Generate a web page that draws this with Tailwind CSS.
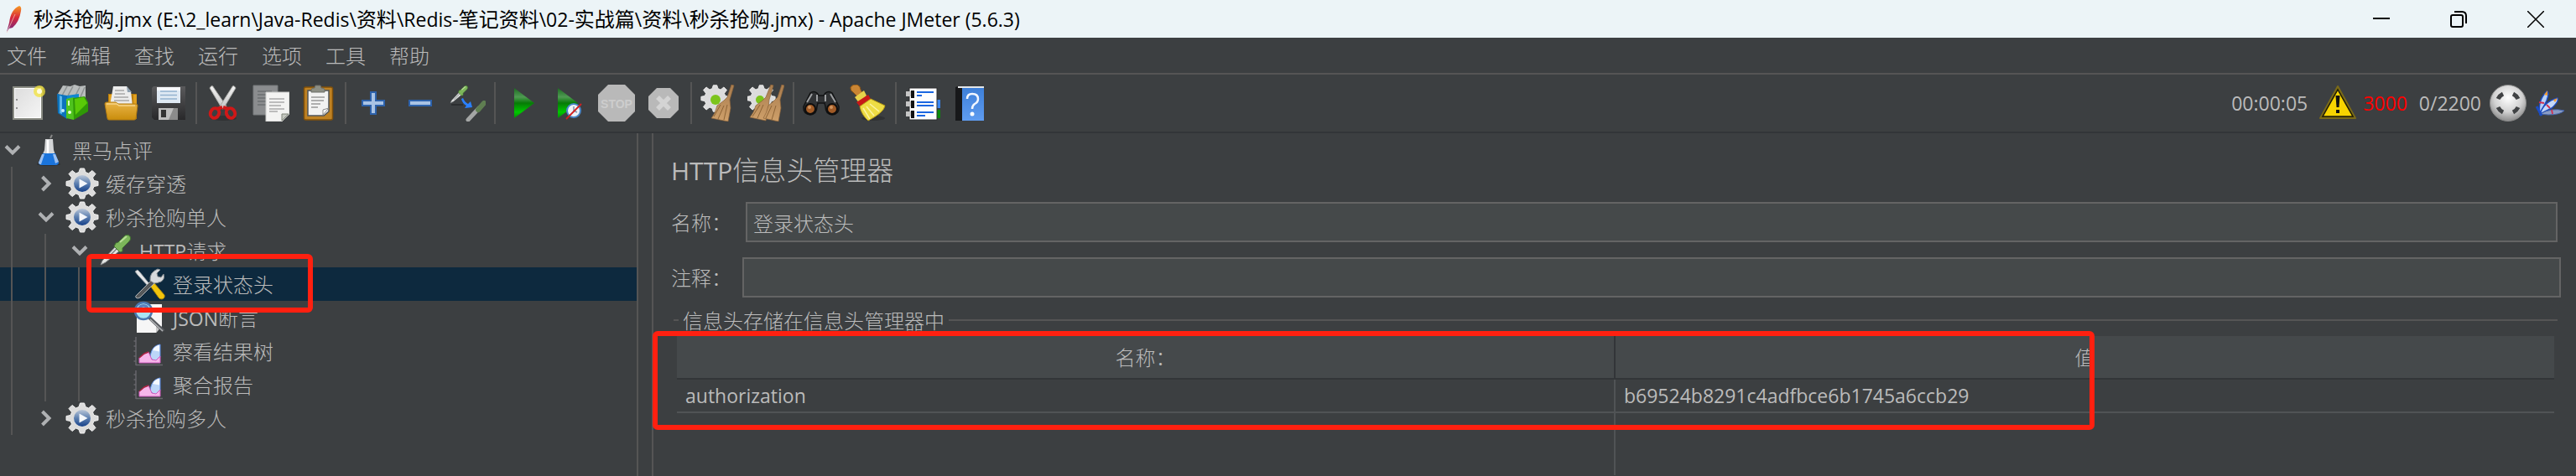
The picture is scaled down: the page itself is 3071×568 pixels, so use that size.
<!DOCTYPE html>
<html lang="zh-CN">
<head>
<meta charset="utf-8">
<title>秒杀抢购.jmx - Apache JMeter (5.6.3)</title>
<script src="https://cdn.jsdelivr.net/npm/@tailwindcss/browser@4"></script>
</head>
<body class="min-h-screen flex flex-col bg-[#3c3f41] text-[#bbbbbb] text-[24px] font-light font-['Noto_Sans_CJK_SC',sans-serif] leading-8 whitespace-nowrap overflow-x-hidden">

<!-- Shared symbols -->
<svg class="absolute size-0" aria-hidden="true">
  <defs>
    <linearGradient id="gGreen" x1="0" y1="0" x2="0" y2="1"><stop offset="0" stop-color="#1d6b22"/><stop offset=".3" stop-color="#4f9a52"/><stop offset=".5" stop-color="#067a06"/><stop offset=".8" stop-color="#00c800"/><stop offset="1" stop-color="#068a06"/></linearGradient>
    <linearGradient id="gFolder" x1="0" y1="0" x2="0" y2="1"><stop offset="0" stop-color="#eab548"/><stop offset="1" stop-color="#c98d0c"/></linearGradient>
    <linearGradient id="gPaper" x1="0" y1="0" x2="1" y2="1"><stop offset="0" stop-color="#dcdcdc"/><stop offset="1" stop-color="#f6f6f6"/></linearGradient>
    <linearGradient id="gDisk" x1="0" y1="0" x2="0" y2="1"><stop offset="0" stop-color="#5a5a5c"/><stop offset="1" stop-color="#28282a"/></linearGradient>
    <linearGradient id="gBlade" x1="0" y1="0" x2="0" y2="1"><stop offset="0" stop-color="#f4f4f4"/><stop offset="1" stop-color="#c4c4c4"/></linearGradient>
    <linearGradient id="gFeather" x1="0" y1="0" x2="0" y2="1"><stop offset="0" stop-color="#f79a22"/><stop offset=".45" stop-color="#d8283a"/><stop offset="1" stop-color="#6c2a86"/></linearGradient>
    <linearGradient id="gBristle" x1="0" y1="0" x2="0" y2="1"><stop offset="0" stop-color="#a87c4e"/><stop offset="1" stop-color="#cfa06a"/></linearGradient>
    <linearGradient id="gBlueBtn" x1="0" y1="0" x2="0" y2="1"><stop offset="0" stop-color="#b9c6d8"/><stop offset=".5" stop-color="#5c7fb0"/><stop offset="1" stop-color="#16418a"/></linearGradient>
    <linearGradient id="gBook" x1="0" y1="0" x2="0" y2="1"><stop offset="0" stop-color="#3d7fd8"/><stop offset="1" stop-color="#5f9cf0"/></linearGradient>
    <radialGradient id="gBall" cx=".5" cy=".35" r=".65"><stop offset="0" stop-color="#ffffff"/><stop offset=".6" stop-color="#d2d2d2"/><stop offset="1" stop-color="#8c8c8c"/></radialGradient>
    <symbol id="gear" viewBox="0 0 40 40">
      <path fill="#dcdcdc" stroke="#f2f2f2" stroke-width="1" d="M17.500 2h5l1.500 4.500 3.500 1.500 4.500-3.500 4 4-3.500 4.500 1.500 3.500 5 1v5l-5 1-1.500 3.500 3.500 4.500-4 4-4.500-3.500-3.500 1.500-1.500 4.500h-5l-1.500-4.500-3.500-1.500-4.500 3.500-4-4 3.500-4.500-1.500-3.500-5-1v-5l5-1 1.500-3.500-3.500-4.500 4-4 4.500 3.500 3.500-1.500z"/>
    </symbol>
    <symbol id="group" viewBox="0 0 40 40">
      <use href="#gear"/>
      <circle cx="20" cy="20" r="10" fill="url(#gBlueBtn)"/>
      <path d="M16.500 14.500l10 5.500-10 5.500z" fill="#f4f7fb"/>
    </symbol>
    <symbol id="chart" viewBox="0 0 40 40">
      <path d="M4 3v34M4 36.500h32M1.500 8h2M1.500 14h2M1.500 20h2M1.500 26h2M1.500 32h2" stroke="#66666b" stroke-width="1.500" fill="none"/>
      <path d="M21 27c1-9 5-14 12-15v15l-7 6z" fill="#bcd6f8" stroke="#5b8ae0"/>
      <path d="M24 19c2-4 5-6 8-6.500v8z" fill="#f4f9ff"/>
      <path d="M8 34v-6l6-5 5-2 4 9 5 1 5-5v8z" fill="#f6b6ea" stroke="#d05ac0"/>
      <path d="M8 28l6-5 5-2" stroke="#a8243e" stroke-width="1.500" fill="none"/>
    </symbol>
    <symbol id="pipette" viewBox="0 0 40 40">
      <path d="M2 37L4 32 21 14l5 5L8 34z" fill="#e4e6e4" stroke="#85888a"/>
      <path d="M9 30L22 17" stroke="#787c7c" stroke-width="1.500"/>
      <path d="M20 11l3-1 8-8q4-2 6 1t-1 6l-8 8v4l-3 1-7-7z" fill="#7cb65a" stroke="#3f7030"/>
      <path d="M25 10l8-7" stroke="#b8dc98" stroke-width="2"/>
    </symbol>
    <symbol id="down" viewBox="0 0 30 18"><path d="M7 4.500l8 8 8-8" fill="none" stroke="#afb1b3" stroke-width="4"/></symbol>
    <symbol id="right" viewBox="0 0 30 20"><path d="M10.500 2l8 8-8 8" fill="none" stroke="#afb1b3" stroke-width="4"/></symbol>
  </defs>
</svg>

<!-- Title bar -->
<header class="h-[45px] shrink-0 bg-[#ecf4f7] text-black flex items-center">
  <svg class="w-7 h-9 ml-[2px] mr-[10px]" viewBox="0 0 28 36"><path d="M6 33l3-11Q11 6 21 2q3 1 2 6-2 13-10 20l-4 1z" fill="url(#gFeather)"/><path d="M6 34L16 12" stroke="#f6d0c0" stroke-width=".7"/></svg>
  <h1 class="font-normal">秒杀抢购<span class="font-['Open_Sans'] text-[23px]">.jmx (E:\2_learn\Java-Redis\</span>资料<span class="font-['Open_Sans'] text-[23px]">\Redis-</span>笔记资料<span class="font-['Open_Sans'] text-[23px]">\02-</span>实战篇<span class="font-['Open_Sans'] text-[23px]">\</span>资料<span class="font-['Open_Sans'] text-[23px]">\</span>秒杀抢购<span class="font-['Open_Sans'] text-[23px]">.jmx) - Apache JMeter (5.6.3)</span></h1>
  <div class="ml-auto flex h-full pr-[2px]">
    <button aria-label="最小化" class="w-[92px] flex items-center justify-center"><svg class="w-5 h-5" viewBox="0 0 20 20"><path d="M0 9h20" stroke="#000" stroke-width="2"/></svg></button>
    <button aria-label="还原" class="w-[92px] flex items-center justify-center"><svg class="w-5 h-5" viewBox="0 0 20 20"><rect x="1" y="5" width="14" height="14" rx="2" fill="none" stroke="#000" stroke-width="2"/><path d="M5 1h9q5 0 5 5v9" fill="none" stroke="#000" stroke-width="2"/></svg></button>
    <button aria-label="关闭" class="w-[92px] flex items-center justify-center"><svg class="w-5 h-5" viewBox="0 0 20 20"><path d="M0 0l20 20M20 0L0 20" stroke="#000" stroke-width="1.500"/></svg></button>
  </div>
</header>

<!-- Menu -->
<nav class="h-[44px] shrink-0 border-b-2 border-[#555555] flex items-center gap-7 pl-2">
  <button>文件</button><button>编辑</button><button>查找</button><button>运行</button><button>选项</button><button>工具</button><button>帮助</button>
</nav>

<!-- Toolbar -->
<div class="h-[70px] shrink-0 border-b-2 border-[#323538] flex items-center pl-[11px] pr-[13px]">
  <div class="flex gap-3">
    <button aria-label="新建"><svg class="size-11" viewBox="0 0 44 44"><rect x="5" y="3" width="34" height="38" fill="url(#gPaper)" stroke="#8a8c84" stroke-width="2"/><rect x="6.500" y="4.500" width="31" height="35" fill="none" stroke="#fff"/><path d="M9 17v2M9 27v2" stroke="#777" stroke-width="1.500"/><circle cx="36" cy="8" r="7" fill="#f3e33a" opacity=".75"/><circle cx="36" cy="8" r="3" fill="#fffce0"/></svg></button>
    <button aria-label="模板"><svg class="size-11" viewBox="0 0 44 44"><path d="M2 11L8 1l9 1 5-2 6 2 7-1v19L14 18z" fill="#b9bdbd"/><path d="M7 13L13 2M13 15l7-13M22 15l6-12M28 17l6-14" stroke="#8d9292" stroke-width="1.500"/><path d="M1 11l12 2v28L2 34z" fill="#0c73bd"/><path d="M13 13l14-2v20l-14 9z" fill="#1187cf"/><path d="M4 13l3 1v21l-3-1z" fill="#5db6ea"/><path d="M12 17l9-2v27l-9-2z" fill="#4fc31e"/><path d="M20 16l14-2 4 7v11L21 42z" fill="#2f9906"/><path d="M22 17l11-2 4 7-14 14z" fill="#59c908"/><circle cx="8" cy="31" r="2" fill="#c8ecff"/><circle cx="16" cy="33" r="2" fill="#e8ffd8"/><path d="M15 19v6" stroke="#d8ffc0" stroke-width="2"/></svg></button>
    <button aria-label="打开"><svg class="size-11" viewBox="0 0 44 44"><path d="M6 11h34v30H6z" fill="#b97c0a"/><path d="M7 12h5v10H7zM36 12h4v18h-4z" fill="#e0a020"/><path d="M12 2h16l5 6 2 17H8z" fill="#ececec"/><path d="M28 2l1 7h5z" fill="#8ea0b0"/><path d="M14 7h11M14 11h12M13 15h17M13 19h18" stroke="#a8a8a8" stroke-width="1.500"/><path d="M2 23q0-2 2-2h11l3 2h20q3 0 3 2l-2 15q0 2-2 2H7q-2 0-2-2z" fill="url(#gFolder)" stroke="#b47c10"/><path d="M4 23h12l3 2h19" stroke="#f6d488" stroke-width="1.500" fill="none"/></svg></button>
    <button aria-label="保存"><svg class="size-11" viewBox="0 0 44 44"><path d="M4 2h38v40H5l-3-3V4z" fill="url(#gDisk)"/><rect x="8" y="3" width="28" height="19" fill="#dfe9f3"/><path d="M8 3h28v4H8z" fill="#f6f8fb"/><path d="M12 8h20M12 12.500h20M12 17h20" stroke="#94b2cf" stroke-width="1.500"/><path d="M10 28h23v14H10z" fill="#bdbdbd"/><path d="M22 42l6-14h5v14z" fill="#8b8b8b"/><rect x="13" y="30" width="6" height="9" fill="#333"/></svg></button>
  </div>
  <div class="w-[2px] h-[50px] bg-[#555555] mx-[10px]"></div>
  <div class="flex gap-3">
    <button aria-label="剪切"><svg class="size-11" viewBox="0 0 44 44"><ellipse cx="21" cy="40" rx="16" ry="3" fill="#303234"/><path d="M5 4q3-5 5 0l15 22-5 3z" fill="url(#gBlade)" stroke="#a9aaa6"/><path d="M36 4q-3-5-5 0L17 26l4 3z" fill="url(#gBlade)" stroke="#a9aaa6"/><g fill="none" stroke="#d01818" stroke-width="4"><ellipse cx="11" cy="34" rx="5" ry="6" transform="rotate(25 11 34)"/><ellipse cx="30" cy="34" rx="5" ry="6" transform="rotate(-25 30 34)"/><path d="M14 29l6-2M27 29l-6-2"/></g></svg></button>
    <button aria-label="复制"><svg class="size-11" viewBox="0 0 44 44"><path d="M1 1h29v35H1z" fill="#8b8d8f" stroke="#777a7c"/><path d="M6 8h17M6 12h17M6 16h12M6 20h12M6 24h10" stroke="#6c6f71" stroke-width="1.500"/><path d="M16 9h28v26l-9 9H16z" fill="#f3f3f2" stroke="#c9cac8"/><path d="M35 43v-8h8z" fill="#c4c7c0" stroke="#7e8478"/><path d="M20 17h18M20 21h18M20 25h14M20 29h18M20 32h10" stroke="#aaaaaa" stroke-width="1.500"/></svg></button>
    <button aria-label="粘贴"><svg class="size-11" viewBox="0 0 44 44"><rect x="5.500" y="3" width="34" height="39" rx="2" fill="#bf8223" stroke="#80500a" stroke-width="1.500"/><path d="M10 7h25v25l-6 5H10z" fill="#f2f2f2" stroke="#505458" stroke-width="1.500"/><path d="M28 36v-6l7-2z" fill="#fff" stroke="#888"/><path d="M14 15h16M14 19h15M14 23h11M14 27h8" stroke="#999" stroke-width="1.500"/><path d="M14 9V6q0-2 4-2l1-3h6l1 3q4 0 4 2v3z" fill="#8c8e84" stroke="#6c6e68"/></svg></button>
  </div>
  <div class="w-[2px] h-[50px] bg-[#555555] mx-[10px]"></div>
  <div class="flex gap-3">
    <button aria-label="展开"><svg class="size-11" viewBox="0 0 44 44"><path d="M19 9h6v10h10v6H25v10h-6V25H9v-6h10z" fill="#a9c3e4" stroke="#2d62ab" stroke-width="2"/></svg></button>
    <button aria-label="折叠"><svg class="size-11" viewBox="0 0 44 44"><path d="M9 19h26v6H9z" fill="#a9c3e4" stroke="#2d62ab" stroke-width="2"/></svg></button>
    <button aria-label="切换"><svg class="size-11" viewBox="0 0 44 44"><path d="M3 24h14" stroke="#2c2e30" stroke-width="2"/><use href="#pipette" x="1" y="0" width="23" height="24"/><g opacity=".7"><path d="M23 42L36 28" stroke="#d0d2d0" stroke-width="5" stroke-linecap="round"/><path d="M35 30l7-8" stroke="#6f9a58" stroke-width="6" stroke-linecap="round"/></g><path d="M17 16q2 5 6 7l3-3 2 7-9 1 2-3q-5-3-6-8z" fill="#2a80ff"/></svg></button>
  </div>
  <div class="w-[2px] h-[50px] bg-[#555555] mx-[10px]"></div>
  <div class="flex gap-3">
    <button aria-label="启动"><svg class="size-11" viewBox="0 0 44 44"><path d="M12 4l24 18-24 18z" fill="url(#gGreen)"/></svg></button>
    <button aria-label="不停顿开始"><svg class="size-11" viewBox="0 0 44 44"><path d="M8 4l24 18L8 40z" fill="url(#gGreen)"/><circle cx="27" cy="31" r="8" fill="#eef3f8" stroke="#4a86c8" stroke-width="2"/><path d="M27 26v5l4 2" stroke="#8090a8" stroke-width="1.500" fill="none"/><path d="M18 41l18-18" stroke="#d22020" stroke-width="1.800"/></svg></button>
    <button aria-label="停止"><svg class="size-11" viewBox="0 0 44 44"><path d="M12 0h20l12 12v20L32 44H12L0 32V12z" fill="#b9b9b9"/><text x="22" y="28" text-anchor="middle" font-family="Liberation Sans" font-weight="700" font-size="14" fill="#cdcdcd">STOP</text></svg></button>
    <button aria-label="关闭线程"><svg class="size-11" viewBox="0 0 44 44"><path d="M14 4h16l10 10v16L30 40H14L4 30V14z" fill="#b9b9b9"/><path d="M15 15l14 14M29 15L15 29" stroke="#d4d4d4" stroke-width="5.500"/></svg></button>
  </div>
  <div class="w-[2px] h-[50px] bg-[#555555] mx-[10px]"></div>
  <div class="flex gap-3">
    <button aria-label="清除"><svg class="size-11" viewBox="0 0 44 44"><use href="#gear" x="0" y="-1" width="35" height="35"/><circle cx="18" cy="18" r="6" fill="#7cc41c"/><path d="M37 0l3 1-5 17 1 10-3 16-20-4q5-6 7-15l8-6 4-4z" fill="url(#gBristle)" stroke="#8a6238" stroke-width=".7"/><path d="M16 38l8-14M21 41l7-16M28 42l4-18" stroke="#8d6436"/></svg></button>
    <button aria-label="清除全部"><svg class="size-11" viewBox="0 0 44 44"><use href="#gear" x="-1" y="-1" width="35" height="35"/><circle cx="15" cy="18" r="5" fill="#7cc41c"/><path d="M28 0l3 1-5 17-1 10-3 15-19-4q5-6 7-14l8-6 4-4z" fill="url(#gBristle)" stroke="#8a6238" stroke-width=".7"/><path d="M41 0l3 1-5 17 1 10-3 16-18-4q4-6 6-15l7-6 4-4z" fill="url(#gBristle)" stroke="#8a6238" stroke-width=".7"/><path d="M6 38l9-14M12 40l7-16M22 40l7-15M29 42l5-17" stroke="#8d6436"/></svg></button>
  </div>
  <div class="w-[2px] h-[50px] bg-[#555555] mx-[10px]"></div>
  <div class="flex gap-3">
    <button aria-label="查找"><svg class="size-11" viewBox="0 0 44 44"><path d="M1 26L9 10q4-3 8 0l2 3h6l2-3q4-3 8 0l8 16q1 9-8 10-8-1-8-10l-1-4h-8l-1 4q0 9-8 10-9-1-8-10z" fill="#303234" stroke="#121314" stroke-width="1.500"/><path d="M5 21l6-10M39 21l-6-10M17 12v8M27 12v8" stroke="#9c9ea0" stroke-width="2"/><circle cx="9" cy="29" r="6" fill="#a05a26" stroke="#0e0e0e" stroke-width="2"/><circle cx="35" cy="29" r="6" fill="#a05a26" stroke="#0e0e0e" stroke-width="2"/><circle cx="8" cy="27" r="2" fill="#cf9460"/><circle cx="34" cy="27" r="2" fill="#cf9460"/></svg></button>
    <button aria-label="重置查找"><svg class="size-11" viewBox="0 0 44 44"><ellipse cx="28" cy="40" rx="14" ry="3" fill="#303234"/><path d="M1 3q3-4 8-3 4 2 4 6l3 6-5 4-6-6Q0 7 1 3z" fill="#c98534" stroke="#8a5414"/><path d="M6 15l11-8 3 6-8 10z" fill="#e8d24a"/><path d="M8 21l14-9 3 5-13 9z" fill="#c81818"/><path d="M12 26l13-9 17 8q-1 8-20 18Q14 36 12 26z" fill="#eedc44" stroke="#b89c14"/><path d="M16 28l8 13M20 26l9 11M24 23l11 9" stroke="#fbf3a0" stroke-width="1.500"/></svg></button>
  </div>
  <div class="w-[2px] h-[50px] bg-[#555555] mx-[10px]"></div>
  <div class="flex gap-3">
    <button aria-label="函数助手"><svg class="size-11" viewBox="0 0 44 44"><path d="M36 18h6v10h-6z" fill="#3a86f0"/><path d="M36 30h6v10h-6z" fill="#0b8a0b"/><rect x="5" y="4" width="33" height="38" fill="#fdfdfd" stroke="#2b2d2e"/><path d="M14 9h20M14 21h20M14 25h20M14 33h20" stroke="#1a66e0" stroke-width="2"/><path d="M14 13h6M14 37h10" stroke="#1a66e0" stroke-width="2"/><path d="M7 7h4v9H7zM7 19h4v9H7zM7 31h4v9H7z" fill="#111"/><path d="M1 8h6v6H1zM1 20h6v6H1zM1 32h6v6H1z" fill="#c6c6c6"/></svg></button>
    <button aria-label="帮助"><svg class="size-11" viewBox="0 0 44 44"><path d="M4 3l3-1h31v41H4z" fill="#17181a"/><path d="M12 3h26v40H12z" fill="url(#gBook)"/><path d="M7 3h31" stroke="#e4e6e8" stroke-width="2"/><path d="M18 17q0-6 6-6 7 0 7 6 0 4-4 6-3 2-3 6" fill="none" stroke="#f2f7ff" stroke-width="2.500"/><circle cx="24" cy="35" r="2.500" fill="#fff"/></svg></button>
  </div>
  <div class="ml-auto flex items-center font-['Open_Sans'] font-normal text-[23px]">
    <span class="mr-[14px]">00:00:05</span>
    <svg class="size-11 mr-2" viewBox="0 0 44 44"><path d="M22 2L43 40H1z" fill="#6a5a10" stroke="#7a6a18" stroke-width="2" stroke-linejoin="round"/><path d="M22 6L40 38H4z" fill="#f7d400" stroke="#1c1a08" stroke-width="1.500"/><path d="M19.500 13h5l-1 14h-3z" fill="#111"/><rect x="20" y="30" width="4" height="4" fill="#111"/></svg>
    <span class="text-[#ff0000] mr-[14px]">3000</span>
    <span class="mr-[10px]">0/2200</span>
    <svg class="size-11 mr-[10px]" viewBox="0 0 44 44"><circle cx="22" cy="22" r="21.500" fill="url(#gBall)" stroke="#8a8a8a"/><g stroke="#404244" stroke-width="5" fill="none"><path d="M10 17q2-4 6-6"/><path d="M28 11q4 2 6 6"/><path d="M10 27q2 4 6 6"/><path d="M28 33q4-2 6-6"/></g></svg>
    <svg class="size-9" viewBox="0 0 36 36"><path d="M6 31Q3 15 14 4q4 1 0 11z" fill="#b8d0f8" stroke="#1c4cc0" stroke-width="1.500"/><path d="M6 31Q11 16 27 12q2 4-7 12z" fill="#c4d8fa" stroke="#1c4cc0" stroke-width="1.500"/><path d="M6 31q14-8 29-4-5 5-19 5z" fill="#8a9cc4" stroke="#4464ac"/><path d="M11 8l4-5v6zM22 14l5-2-3 5z" fill="#f29a2c"/><path d="M5 17l6 1M14 20l4 4M20 26l1 5" stroke="#d03050" stroke-width="1.800"/><path d="M2 22l6 11" stroke="#1c4cc0" stroke-width="3"/></svg>
  </div>
</div>

<div class="flex flex-1">
  <!-- Test plan tree -->
  <aside class="relative w-[761px] shrink-0 border-r-2 border-[#555555]">
    <ul>
      <li class="h-10 flex items-center">
        <button aria-label="折叠节点" class="w-[30px] mr-2"><svg class="w-[30px] h-[18px]"><use href="#down"/></svg></button>
        <svg class="size-10 mr-2" viewBox="0 0 40 40"><ellipse cx="20" cy="37" rx="14" ry="2" fill="#2e3032"/><path d="M22 6l2-4" stroke="#888" stroke-width="2"/><path d="M16 7h9l1 13 5 14q0 4-4 4H13q-4 0-4-4l6-14z" fill="#d4d6d8"/><path d="M13 24h15l4 11q0 3-4 3H12q-4 0-4-3z" fill="#1a74dc"/><path d="M12 25l-4 10q0 2 3 2l4-12zM28 25l4 9-4 2-3-11z" fill="#9cc0f0"/><path d="M19 8v16" stroke="#fff" stroke-width="2.500"/></svg>
        <span>黑马点评</span>
      </li>
      <li class="h-10 flex items-center">
        <i class="w-10 h-10 pl-[13px]"><b class="block w-[2px] h-full bg-[#555555]"></b></i>
        <button aria-label="展开节点" class="w-[30px] mr-2"><svg class="w-[30px] h-5"><use href="#right"/></svg></button>
        <svg class="size-10 mr-2"><use href="#group"/></svg><span>缓存穿透</span>
      </li>
      <li class="h-10 flex items-center">
        <i class="w-10 h-10 pl-[13px]"><b class="block w-[2px] h-full bg-[#555555]"></b></i>
        <button aria-label="折叠节点" class="w-[30px] mr-2"><svg class="w-[30px] h-[18px]"><use href="#down"/></svg></button>
        <svg class="size-10 mr-2"><use href="#group"/></svg><span>秒杀抢购单人</span>
      </li>
      <li class="h-10 flex items-center">
        <i class="w-10 h-10 pl-[13px]"><b class="block w-[2px] h-full bg-[#555555]"></b></i>
        <i class="w-10 h-10 pl-[13px]"><b class="block w-[2px] h-full bg-[#555555]"></b></i>
        <button aria-label="折叠节点" class="w-[30px] mr-2"><svg class="w-[30px] h-[18px]"><use href="#down"/></svg></button>
        <svg class="size-10 mr-2"><use href="#pipette"/></svg><span><span class="font-['Open_Sans'] font-normal text-[23px]">HTTP</span>请求</span>
      </li>
      <li class="h-10 flex items-center bg-[#0d293e]">
        <i class="w-10 h-10 pl-[13px]"><b class="block w-[2px] h-full bg-[#555555]"></b></i>
        <i class="w-10 h-10 pl-[13px]"><b class="block w-[2px] h-full bg-[#555555]"></b></i>
        <i class="w-10 h-10 pl-[13px]"><b class="block w-[2px] h-full bg-[#555555]"></b></i>
        <svg class="size-10 ml-[38px] mr-2" viewBox="0 0 40 40"><path d="M3 5l3-2 3 3 13 16-2 2L6 9z" fill="#e4e6e8" stroke="#8c9094" stroke-width=".8"/><path d="M21 22l5-3 12 14q1 4-3 5-3 0-4-2z" fill="#f2c40c" stroke="#a88408"/><path d="M5 33l17-17 4 3L9 36q-3 2-5 0-1-2 1-3z" fill="#55585a" stroke="#b0b4b6"/><path d="M21 16q-1-10 9-14l3 1-4 4 1 4 4 1 3-4q2 6-3 9-5 2-8 2z" fill="#d8dadc" stroke="#888c90"/></svg>
        <span>登录状态头</span>
      </li>
      <li class="h-10 flex items-center">
        <i class="w-10 h-10 pl-[13px]"><b class="block w-[2px] h-full bg-[#555555]"></b></i>
        <i class="w-10 h-10 pl-[13px]"><b class="block w-[2px] h-full bg-[#555555]"></b></i>
        <i class="w-10 h-10 pl-[13px]"><b class="block w-[2px] h-full bg-[#555555]"></b></i>
        <svg class="size-10 ml-[38px] mr-2" viewBox="0 0 40 40"><path d="M5 4h30v26l-7 8H5z" fill="#f6f6f6"/><path d="M28 38v-8h7z" fill="#c8c8c8"/><path d="M20 20l17 16" stroke="#55585c" stroke-width="4"/><path d="M21 22l15 14" stroke="#b4b6b8" stroke-width="1.500"/><circle cx="13" cy="12" r="10" fill="#a9e4f4" stroke="#4a78b0" stroke-width="2.500"/><path d="M6 10q7-5 14 0-1-6-7-6t-7 6z" fill="#5c80bc"/></svg>
        <span><span class="font-['Open_Sans'] font-normal text-[23px]">JSON</span>断言</span>
      </li>
      <li class="h-10 flex items-center">
        <i class="w-10 h-10 pl-[13px]"><b class="block w-[2px] h-full bg-[#555555]"></b></i>
        <i class="w-10 h-10 pl-[13px]"><b class="block w-[2px] h-full bg-[#555555]"></b></i>
        <i class="w-10 h-10 pl-[13px]"><b class="block w-[2px] h-full bg-[#555555]"></b></i>
        <svg class="size-10 ml-[38px] mr-2"><use href="#chart"/></svg><span>察看结果树</span>
      </li>
      <li class="h-10 flex items-center">
        <i class="w-10 h-10 pl-[13px]"><b class="block w-[2px] h-full bg-[#555555]"></b></i>
        <i class="w-10 h-10 pl-[13px]"><b class="block w-[2px] h-full bg-[#555555]"></b></i>
        <i class="w-10 h-10 pl-[13px]"><b class="block w-[2px] h-full bg-[#555555]"></b></i>
        <svg class="size-10 ml-[38px] mr-2"><use href="#chart"/></svg><span>聚合报告</span>
      </li>
      <li class="h-10 flex items-center">
        <i class="w-10 h-10 pl-[13px]"><b class="block w-[2px] h-full bg-[#555555]"></b></i>
        <button aria-label="展开节点" class="w-[30px] mr-2"><svg class="w-[30px] h-5"><use href="#right"/></svg></button>
        <svg class="size-10 mr-2"><use href="#group"/></svg><span>秒杀抢购多人</span>
      </li>
    </ul>
    <!-- Highlight around the selected node -->
    <div class="absolute left-[103px] top-36 w-[270px] h-[70px] border-6 border-[#ff2010] rounded-md pointer-events-none"></div>
  </aside>

  <!-- Header manager -->
  <main class="relative flex-1 min-w-0 ml-4 border-l-2 border-[#555555] pl-[21px] pr-[18px] pt-[22px]">
    <h2 class="h-10 leading-10 text-[32px]"><span class="font-['Open_Sans'] font-normal text-[30px]">HTTP</span>信息头管理器</h2>
    <div class="mt-5 mr-1 flex items-center">
      <label for="name" class="w-[89px]">名称：</label>
      <input id="name" value="登录状态头" class="flex-1 min-w-0 h-12 border-2 border-[#646464] bg-[#45494a] px-[7px]">
    </div>
    <div class="mt-[18px] flex items-center">
      <label for="comment" class="w-[85px]">注释：</label>
      <input id="comment" class="flex-1 min-w-0 h-12 border-2 border-[#646464] bg-[#45494a] px-[7px]">
    </div>
    <fieldset class="mt-[11px] ml-[3px] mr-1 min-w-0 border-t-2 border-[#555555] px-1 pt-[3px]">
      <legend class="ml-[2px] px-[5px]">信息头存储在信息头管理器中</legend>
      <table class="w-full table-fixed border-separate border-spacing-0 text-left">
        <thead>
          <tr class="bg-[#45494b]">
            <th class="h-[52px] border-b-2 border-r-2 border-[#323538] p-0 text-center font-light">名称：</th>
            <th class="h-[52px] border-b-2 border-[#323538] p-0 text-center font-light">值</th>
          </tr>
        </thead>
        <tbody class="font-['Open_Sans'] font-normal text-[23px]">
          <tr>
            <td class="h-10 border-b-2 border-r-2 border-[#505355] py-0 px-[10px]">authorization</td>
            <td class="h-10 border-b-2 border-[#505355] py-0 px-[10px]">b69524b8291c4adfbce6b1745a6ccb29</td>
          </tr>
          <tr>
            <td class="h-[74px] border-r-2 border-[#505355] p-0"></td>
            <td class="h-[74px] p-0"></td>
          </tr>
        </tbody>
      </table>
    </fieldset>
    <!-- Highlight around the authorization header -->
    <div class="absolute -left-px top-[236px] w-[75%] h-[118px] border-6 border-[#ff2010] rounded-md pointer-events-none"></div>
  </main>
</div>
</body>
</html>
